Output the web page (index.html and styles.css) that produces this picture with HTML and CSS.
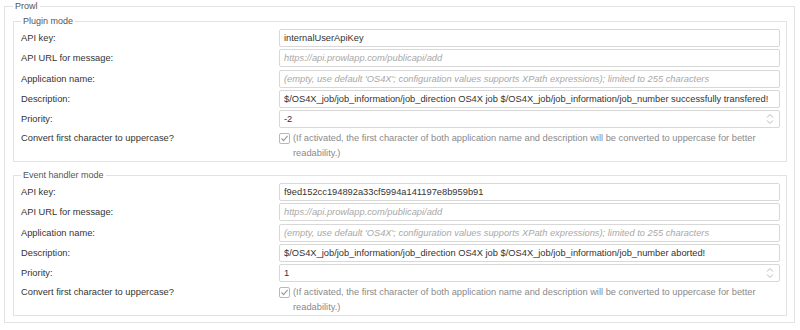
FILE: index.html
```html
<!DOCTYPE html>
<html>

<head>
    <title>Prowl</title>
    <link rel="stylesheet" href="styles.css">
</head>

<body>
    <fieldset class='group'>
        <legend>Prowl</legend>

        <fieldset class='mode'>
            <legend>Plugin mode</legend>
            <div class='row'>
                <label>API key:</label>
                <input type='text' value='internalUserApiKey'>
            </div>
            <div class='row'>
                <label>API URL for message:</label>
                <input type='text' placeholder='https://api.prowlapp.com/publicapi/add'>
            </div>
            <div class='row'>
                <label>Application name:</label>
                <input type='text' placeholder="(empty, use default 'OS4X'; configuration values supports XPath expressions); limited to 255 characters">
            </div>
            <div class='row'>
                <label>Description:</label>
                <input type='text' value='$/OS4X_job/job_information/job_direction OS4X job $/OS4X_job/job_information/job_number successfully transfered!'>
            </div>
            <div class='row'>
                <label>Priority:</label>
                <div class='spin'>
                    <input type='text' value='-2'>
                    <svg width='8' height='12' viewBox='0 0 8 12'>
                        <path d='M1 4.5 L4 1.5 L7 4.5 M1 7.5 L4 10.5 L7 7.5' fill='none' stroke='#b5b5b5' stroke-width='1'/>
                    </svg>
                </div>
            </div>
            <div class='row check-row'>
                <label>Convert first character to uppercase?</label>
                <div class='check'>
                    <svg width='11' height='11' viewBox='0 0 11 11'>
                        <rect x='0.5' y='0.5' width='10' height='10' rx='1.5' fill='#fff' stroke='#b8b8b8'/>
                        <path d='M2.5 5.5 L4.6 7.7 L8.6 2.8' fill='none' stroke='#9a9a9a' stroke-width='1.1'/>
                    </svg>
                    <p>(If activated, the first character of both application name and description will be converted to uppercase for better readability.)</p>
                </div>
            </div>
        </fieldset>

        <fieldset class='mode'>
            <legend>Event handler mode</legend>
            <div class='row'>
                <label>API key:</label>
                <input type='text' value='f9ed152cc194892a33cf5994a141197e8b959b91'>
            </div>
            <div class='row'>
                <label>API URL for message:</label>
                <input type='text' placeholder='https://api.prowlapp.com/publicapi/add'>
            </div>
            <div class='row'>
                <label>Application name:</label>
                <input type='text' placeholder="(empty, use default 'OS4X'; configuration values supports XPath expressions); limited to 255 characters">
            </div>
            <div class='row'>
                <label>Description:</label>
                <input type='text' value='$/OS4X_job/job_information/job_direction OS4X job $/OS4X_job/job_information/job_number aborted!'>
            </div>
            <div class='row'>
                <label>Priority:</label>
                <div class='spin'>
                    <input type='text' value='1'>
                    <svg width='8' height='12' viewBox='0 0 8 12'>
                        <path d='M1 4.5 L4 1.5 L7 4.5 M1 7.5 L4 10.5 L7 7.5' fill='none' stroke='#b5b5b5' stroke-width='1'/>
                    </svg>
                </div>
            </div>
            <div class='row check-row'>
                <label>Convert first character to uppercase?</label>
                <div class='check'>
                    <svg width='11' height='11' viewBox='0 0 11 11'>
                        <rect x='0.5' y='0.5' width='10' height='10' rx='1.5' fill='#fff' stroke='#b8b8b8'/>
                        <path d='M2.5 5.5 L4.6 7.7 L8.6 2.8' fill='none' stroke='#9a9a9a' stroke-width='1.1'/>
                    </svg>
                    <p>(If activated, the first character of both application name and description will be converted to uppercase for better readability.)</p>
                </div>
            </div>
        </fieldset>
    </fieldset>
</body>

</html>
```

FILE: styles.css
```css
body {
    font-family: "Liberation Sans", Arial, sans-serif;
    font-size: 9.3px;
    color: #333;
    background-color: #fff;
    margin: 0;
}

fieldset {
    border: 1px solid #e2e2e2;
    margin: 0;
    min-width: 0;
}

legend {
    font-size: 9px;
    line-height: 13px;
    color: #555;
    padding: 0 2px;
}

.group {
    margin: 0 5px 0 4px;
    padding: 2px 7px 6px 8px;
}

.mode {
    padding: 1px 6px 0 7px;
}

.mode + .mode {
    margin-top: 7px;
}

.row {
    display: grid;
    grid-template-columns: 258px 1fr;
    align-items: center;
    margin-bottom: 2.25px;
}

.row label {
    color: #333;
}

input {
    font-family: inherit;
    font-size: 9.3px;
    color: #333;
    height: 18px;
    box-sizing: border-box;
    border: 1px solid #d8d8d8;
    border-radius: 2px;
    padding: 0 4px;
    width: 100%;
    outline: none;
    background-color: #fff;
}

input::placeholder {
    color: #a8a8a8;
    font-style: italic;
}

.spin {
    display: flex;
    align-items: center;
    height: 18px;
    box-sizing: border-box;
    border: 1px solid #d8d8d8;
    border-radius: 2px;
    padding-right: 5px;
}

.spin input {
    border: 0;
    height: 16px;
}

.check-row {
    align-items: start;
    margin: 3px 0 0;
}

.check-row label {
    line-height: 15px;
}

.check {
    display: flex;
    align-items: flex-start;
}

.check svg {
    flex-shrink: 0;
    margin-top: 2px;
}

.check p {
    margin: 0 0 0 3px;
    line-height: 15px;
    color: #8a8a8a;
}
```
